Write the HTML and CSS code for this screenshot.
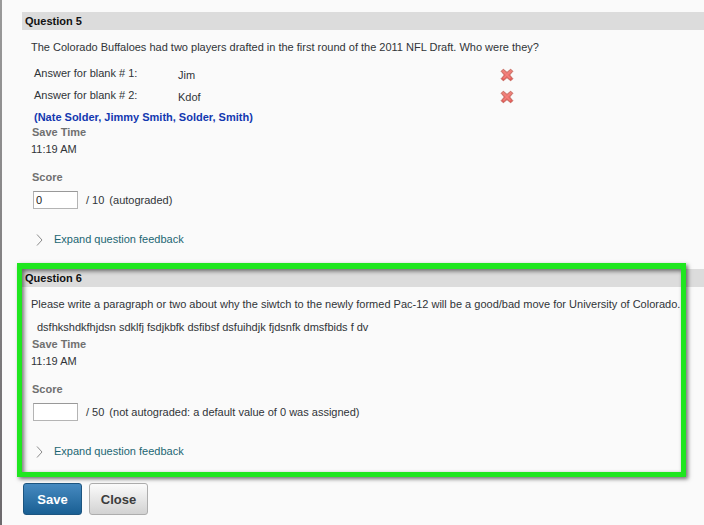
FILE: index.html
```html
<!DOCTYPE html>
<html lang="en">
<head>
<meta charset="utf-8">
<title>Grade Questions</title>
<link rel="stylesheet" href="styles.css">
</head>
<body>
<svg class="defs" aria-hidden="true">
  <defs>
    <linearGradient id="red" x1="0" y1="0" x2="0" y2="1">
      <stop offset="0" stop-color="#ee8a80"/>
      <stop offset="1" stop-color="#e05250"/>
    </linearGradient>
    <symbol id="wrong" viewBox="0 0 14 14">
      <path d="M3.3 1.2 L7 4.4 L10.7 1.2 L12.8 3.3 L9.6 7 L12.8 10.7 L10.7 12.8 L7 9.6 L3.3 12.8 L1.2 10.7 L4.4 7 L1.2 3.3 Z" fill="url(#red)" stroke="#c4665c" stroke-width="1" stroke-linejoin="round"/>
      <path d="M3.4 3.4 L10.4 10.4 M10.4 3.4 L3.4 10.4" stroke="#f4807c" stroke-width="1.4"/>
    </symbol>
    <symbol id="chevron" viewBox="0 0 8 12">
      <path d="M1 0.5 L6 6 L1 11.5" fill="none" stroke="#8c8c8c" stroke-width="1"/>
    </symbol>
  </defs>
</svg>
<main class="page">
  <section class="question">
    <h2 class="question-title">Question 5</h2>
    <div class="question-body">
      <p class="prompt">The Colorado Buffaloes had two players drafted in the first round of the 2011 NFL Draft. Who were they?</p>
      <table class="answers">
        <tr>
          <th scope="row">Answer for blank # 1:</th>
          <td class="given">Jim</td>
          <td class="mark"><svg class="wrong" role="img" aria-label="Incorrect"><use href="#wrong"/></svg></td>
        </tr>
        <tr>
          <th scope="row">Answer for blank # 2:</th>
          <td class="given">Kdof</td>
          <td class="mark"><svg class="wrong" role="img" aria-label="Incorrect"><use href="#wrong"/></svg></td>
        </tr>
      </table>
      <p class="correct">(Nate Solder, Jimmy Smith, Solder, Smith)</p>
      <h3 class="label">Save Time</h3>
      <p class="time">11:19 AM</p>
      <label class="label score-label" for="score5">Score</label>
      <div class="score">
        <input class="score-input" id="score5" type="text" value="0">
        <span>/ 10</span>
        <span class="note">(autograded)</span>
      </div>
      <a class="expand" href="#"><svg class="chevron" aria-hidden="true"><use href="#chevron"/></svg>Expand question feedback</a>
    </div>
  </section>
  <section class="question highlighted">
    <h2 class="question-title">Question 6</h2>
    <div class="question-body">
      <p class="prompt">Please write a paragraph or two about why the siwtch to the newly formed Pac-12 will be a good/bad move for University of Colorado.</p>
      <p class="essay">dsfhkshdkfhjdsn sdklfj fsdjkbfk dsfibsf dsfuihdjk fjdsnfk dmsfbids f dv</p>
      <h3 class="label">Save Time</h3>
      <p class="time">11:19 AM</p>
      <label class="label score-label" for="score6">Score</label>
      <div class="score">
        <input class="score-input" id="score6" type="text" value="">
        <span>/ 50</span>
        <span class="note">(not autograded: a default value of 0 was assigned)</span>
      </div>
      <a class="expand" href="#"><svg class="chevron" aria-hidden="true"><use href="#chevron"/></svg>Expand question feedback</a>
    </div>
  </section>
  <div class="actions">
    <button class="button primary" type="button">Save</button>
    <button class="button" type="button">Close</button>
  </div>
</main>
</body>
</html>
```

FILE: styles.css
```css
* {
  box-sizing: border-box;
}

body {
  margin: 0;
  background: #fafafa;
  color: #303438;
  font: 11px/15px "Liberation Sans", Arial, sans-serif;
}

h2,
h3,
p {
  margin: 0;
  font-size: inherit;
}

.defs {
  position: absolute;
  width: 0;
  height: 0;
}

.page {
  min-height: 100vh;
  padding: 12px 0 10px 22px;
  background: linear-gradient(#9a9a9a, #6c696c) left / 2px 100% no-repeat;
}

.question {
  padding-bottom: 22px;
}

.question-title {
  padding-left: 3px;
  background: #dcdcdc;
  color: #111;
  line-height: 18px;
}

.question-body {
  padding: 10px 10px 0 9px;
}

.prompt {
  white-space: nowrap;
}

.answers {
  margin: 8px 0 3px 3px;
  border-collapse: collapse;
}

.answers th,
.answers td {
  height: 22px;
  padding: 0;
  font-weight: normal;
  text-align: left;
  vertical-align: top;
}

.answers th {
  width: 144px;
  padding-top: 3px;
}

.answers .given {
  width: 322px;
  padding-top: 5px;
}

.answers .mark {
  padding-top: 5px;
}

.wrong {
  display: block;
  width: 14px;
  height: 14px;
}

.correct {
  padding-left: 3px;
  color: #1238b0;
  font-weight: bold;
}

.essay {
  margin: 8px 0 2px;
  padding-left: 6px;
}

.label {
  display: block;
  padding-left: 1px;
  color: #707070;
  font-weight: bold;
}

.time {
  margin-top: 2px;
}

.score-label {
  margin-top: 13px;
}

.score {
  display: flex;
  align-items: center;
  margin: 6px 0 23px 2px;
}

.score-input {
  width: 45px;
  height: 18px;
  margin-right: 8px;
  padding: 0 2px;
  border: 1px solid #b4b4b4;
  border-top-color: #999;
  background: #fff;
  color: #222;
  font: inherit;
}

.note {
  margin-left: 5px;
}

.expand {
  display: flex;
  align-items: center;
  gap: 10px;
  width: max-content;
  padding-left: 5px;
  color: #1c6673;
  text-decoration: none;
}

.chevron {
  width: 8px;
  height: 12px;
}

.highlighted {
  position: relative;
}

.highlighted::after {
  content: "";
  position: absolute;
  inset: -6px 18px 4px -5px;
  border: 5px solid #1fe61f;
  border-top-width: 6px;
  box-shadow: 2px 2px 4px rgba(0, 0, 0, 0.55), inset 2px 2px 4px rgba(0, 0, 0, 0.55);
  pointer-events: none;
}

.actions {
  display: flex;
  gap: 7px;
  padding: 2px 0 0 1px;
}

.button {
  min-width: 59px;
  height: 32px;
  padding: 0 10px;
  border: 1px solid #adadad;
  border-radius: 3px;
  background: linear-gradient(#fbfbfb, #d2d2d2);
  color: #3c3c3c;
  font: bold 13px/15px "Liberation Sans", Arial, sans-serif;
}

.primary {
  border-color: #1d5580;
  background: linear-gradient(#468ac0, #195f93);
  color: #fff;
}
```
